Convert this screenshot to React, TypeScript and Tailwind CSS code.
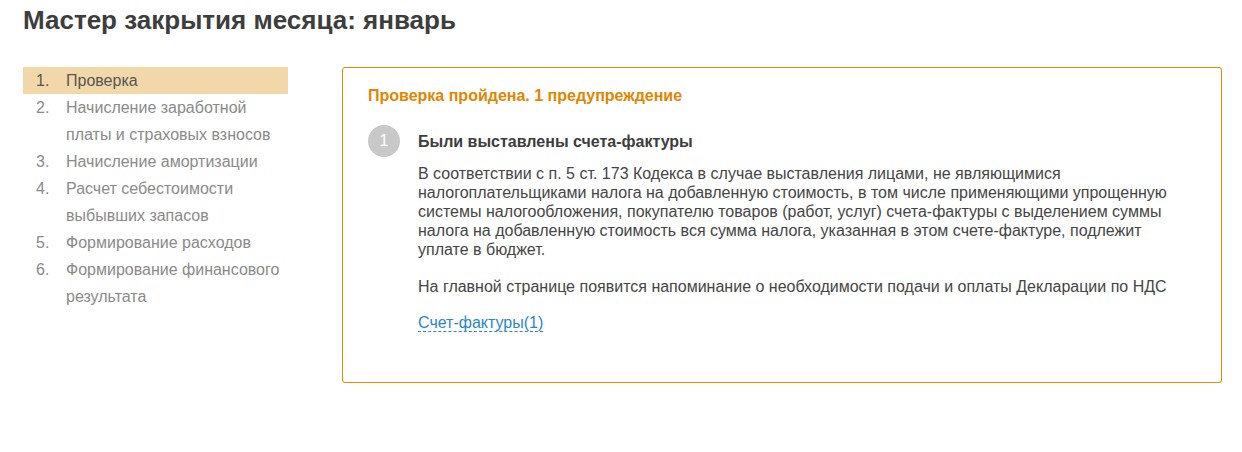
import React from "react";

const steps = [
  { n: 1, label: "Проверка" },
  { n: 2, label: "Начисление заработной платы и страховых взносов" },
  { n: 3, label: "Начисление амортизации" },
  { n: 4, label: "Расчет себестоимости выбывших запасов" },
  { n: 5, label: "Формирование расходов" },
  { n: 6, label: "Формирование финансового результата" },
];

export default function App() {
  const activeStep = 1;

  return (
    <div className="min-h-[452px] bg-white pl-[23px] pr-[20px] pt-[5px] font-['Liberation_Sans',Arial,sans-serif]">
      <h1 className="text-[26px] font-bold leading-[30px] text-[#3d3d3d]">
        Мастер закрытия месяца: январь
      </h1>

      <div className="mt-[32px] flex items-start gap-[54px]">
        {/* Шаги */}
        <ol className="w-[265px] shrink-0">
          {steps.map((step) => (
            <li
              key={step.n}
              className={
                step.n === activeStep
                  ? "flex bg-[#f2d8a8] pl-[13px] pr-[4px] text-[16px] leading-[27px] text-[#555555]"
                  : "flex pl-[13px] pr-[4px] text-[16px] leading-[27px] text-[#8a8a8a]"
              }
            >
              <span className="w-[30px] shrink-0">{step.n}.</span>
              <span>{step.label}</span>
            </li>
          ))}
        </ol>

        {/* Результат проверки */}
        <div className="flex-1 rounded-[3px] border border-[#e08c00] pb-[50px] pl-[25px] pr-[25px] pt-[18px]">
          <div className="text-[16px] font-bold leading-[20px] text-[#e08600]">
            Проверка пройдена. 1 предупреждение
          </div>

          <div className="mt-[19px] flex gap-[18px]">
            <div className="flex h-8 w-8 shrink-0 items-center justify-center rounded-full bg-[#c8c8c8] text-[16px] text-white">
              1
            </div>
            <div className="flex-1 text-[16px] leading-[19px] text-[#454545]">
              <div className="flex h-8 items-center font-bold text-[#3d3d3d]">
                Были выставлены счета-фактуры
              </div>
              <p className="mt-[7px]">
                В соответствии с п. 5 ст. 173 Кодекса в случае выставления лицами, не являющимися
                налогоплательщиками налога на добавленную стоимость, в том числе применяющими
                упрощенную системы налогообложения, покупателю товаров (работ, услуг) счета-фактуры с
                выделением суммы налога на добавленную стоимость вся сумма налога, указанная в этом
                счете-фактуре, подлежит уплате в бюджет.
              </p>
              <p className="mt-[18px]">
                На главной странице появится напоминание о необходимости подачи и оплаты Декларации по
                НДС
              </p>
              <div className="mt-[17px]">
                <a
                  href="#"
                  className="border-b border-dashed border-[#2a86c9] text-[#2a86c9]"
                >
                  Счет-фактуры(1)
                </a>
              </div>
            </div>
          </div>
        </div>
      </div>
    </div>
  );
}
